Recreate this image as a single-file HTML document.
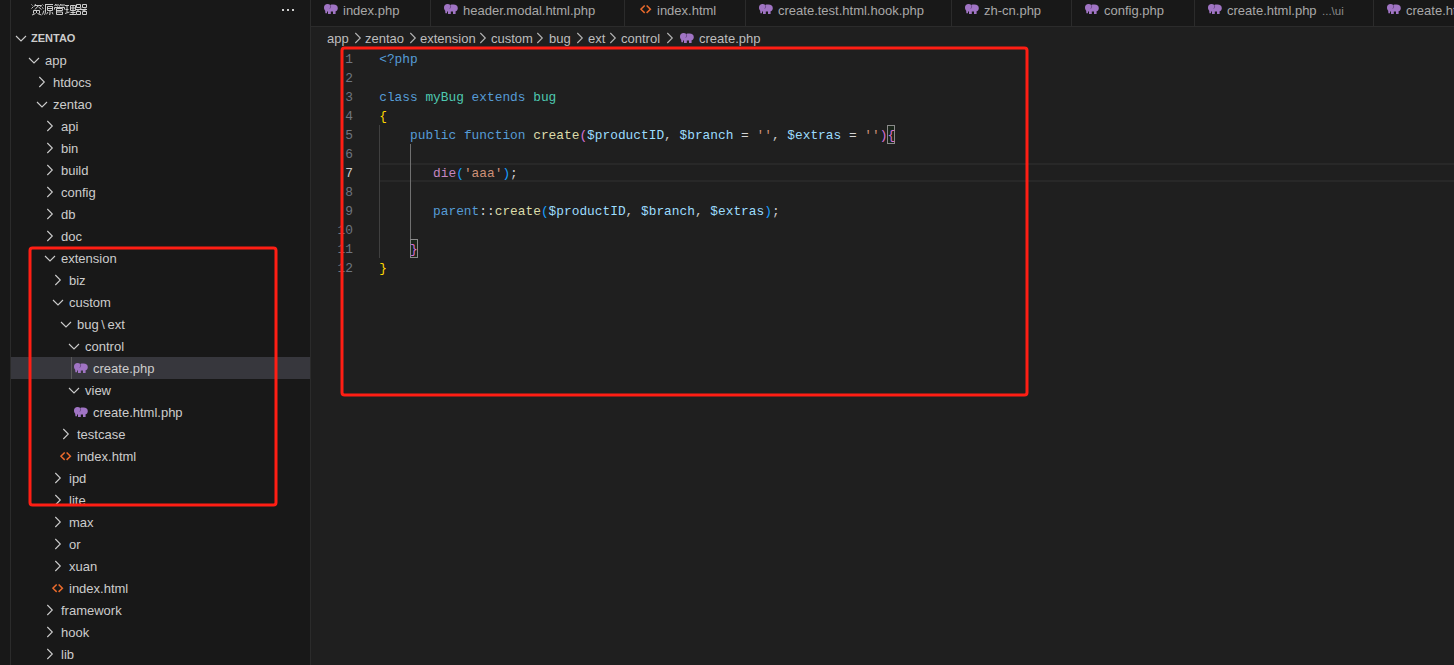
<!DOCTYPE html><html><head><meta charset="utf-8"><style>
html,body{margin:0;padding:0;}
body{width:1454px;height:665px;overflow:hidden;position:relative;background:#181818;font-family:"Liberation Sans", sans-serif;}
.abs{position:absolute;}
.t{position:absolute;white-space:pre;font-size:13px;color:#cccccc;line-height:22px;height:22px;margin-top:1px;}
.tab{position:absolute;white-space:pre;font-size:13px;color:#a8a8a8;line-height:26px;top:-2px;}
.code{position:absolute;white-space:pre;font-family:"Liberation Mono", monospace;font-size:12.83px;line-height:19px;height:19px;color:#cccccc;}
.ln{position:absolute;white-space:pre;font-family:"Liberation Mono", monospace;font-size:12.83px;line-height:19px;height:19px;color:#6e7681;text-align:right;width:40px;}
.bc{position:absolute;white-space:pre;font-size:13px;color:#bdbdbd;line-height:22px;top:28px;}

</style></head><body>
<div class="abs" style="left:10px;top:0;width:1px;height:665px;background:#2b2b2b"></div>
<div class="abs" style="left:310px;top:0;width:1px;height:665px;background:#2b2b2b"></div>
<div class="abs" style="left:311px;top:27px;width:1143px;height:638px;background:#1f1f1f"></div>
<div class="abs" style="left:311px;top:26px;width:1143px;height:1px;background:#2b2b2b"></div>
<svg width="12" height="12" viewBox="0 0 12 12" style="position:absolute;left:31px;top:4px;overflow:visible"><path fill="none" stroke="#cccccc" stroke-width="1" d="M0.5 0.5L1.5 1.5M0.5 4.5L2.5 2.5M4.5 0L3.5 2.5M4 1.5H10.5L9.5 3M7.5 1.5L4 5.5M7.5 3L10.5 5.5M2.5 9.5V6.5H8.5V9.5M5.5 7V9M4.5 9.5L1 11M6.5 9.5L10.5 11"/></svg>
<svg width="12" height="12" viewBox="0 0 12 12" style="position:absolute;left:42px;top:4px;overflow:visible"><path fill="none" stroke="#cccccc" stroke-width="1" d="M0.5 0.5L1.5 1.5M0 3.5L1.5 4.5M0.5 10.5L2 6.5M3 0.5H11M3.5 0.5V7Q3.5 9.5 2.5 10.8M5.5 2.5H10.5V6.5H5.5ZM5.5 4.5H10.5M8 6.5V10.5L7 10M6 8L4.5 10.3M10 8L11 10.3"/></svg>
<svg width="12" height="12" viewBox="0 0 12 12" style="position:absolute;left:53.5px;top:4px;overflow:visible"><path fill="none" stroke="#cccccc" stroke-width="1" d="M2 0L0.5 2M1.5 1H5M2.5 1.5L3.5 2.5M7 0L5.5 2M6.5 1H11M8 1.5L9 2.5M5.5 2.5V3.5M0.5 5.5V3.5H10.5V5.5M2.5 4.5H8.5V6.5H2.5M2.5 4.5V10.5M2.5 8H8.5V10.5H2.5"/></svg>
<svg width="12" height="12" viewBox="0 0 12 12" style="position:absolute;left:64.5px;top:4px;overflow:visible"><path fill="none" stroke="#cccccc" stroke-width="1" d="M0 1.5H4M0.5 5.5H3.5M2 1.5V8.5M0 9.5L4.5 8M5.5 1.5H10.5V6.5H5.5ZM5.5 4H10.5M8 1.5V10.5M5.5 8.5H10.5M4.5 10.5H11"/></svg>
<svg width="12" height="12" viewBox="0 0 12 12" style="position:absolute;left:75.5px;top:4px;overflow:visible"><path fill="none" stroke="#cccccc" stroke-width="1" d="M0.5 0.5H4.5V3.5H0.5ZM6.5 0.5H10.5V3.5H6.5ZM0 5.5H11M5.5 4L0.5 7.5M5.5 5.5L10.5 7.5M8.5 4L9.5 4.8M0.5 7.5H4.5V10.5H0.5ZM6.5 7.5H10.5V10.5H6.5Z"/></svg>
<div class="abs" style="left:282px;top:9px;width:2px;height:2px;background:#cccccc"></div>
<div class="abs" style="left:287px;top:9px;width:2px;height:2px;background:#cccccc"></div>
<div class="abs" style="left:292px;top:9px;width:2px;height:2px;background:#cccccc"></div>
<div class="abs" style="left:11px;top:357px;width:299px;height:22px;background:#37373d"></div>
<div class="abs" style="left:71px;top:357px;width:1px;height:22px;background:#585858"></div>
<svg width="12" height="8" viewBox="0 0 12 8" style="position:absolute;left:15px;top:34px"><path fill="none" stroke="#cccccc" stroke-width="1.1" d="M1 2L6 7L11 2"/></svg>
<div class="abs" style="left:31px;top:27px;font-size:11px;font-weight:bold;line-height:22px;color:#cccccc">ZENTAO</div>
<svg width="12" height="8" viewBox="0 0 12 8" style="position:absolute;left:28px;top:56px"><path fill="none" stroke="#cccccc" stroke-width="1.1" d="M1 2L6 7L11 2"/></svg>
<div class="t" style="left:45px;top:49px">app</div>
<svg width="8" height="12" viewBox="0 0 8 12" style="position:absolute;left:38px;top:76px"><path fill="none" stroke="#cccccc" stroke-width="1.1" d="M1.3 1L6.3 6L1.3 11"/></svg>
<div class="t" style="left:53px;top:71px">htdocs</div>
<svg width="12" height="8" viewBox="0 0 12 8" style="position:absolute;left:36px;top:100px"><path fill="none" stroke="#cccccc" stroke-width="1.1" d="M1 2L6 7L11 2"/></svg>
<div class="t" style="left:53px;top:93px">zentao</div>
<svg width="8" height="12" viewBox="0 0 8 12" style="position:absolute;left:46px;top:120px"><path fill="none" stroke="#cccccc" stroke-width="1.1" d="M1.3 1L6.3 6L1.3 11"/></svg>
<div class="t" style="left:61px;top:115px">api</div>
<svg width="8" height="12" viewBox="0 0 8 12" style="position:absolute;left:46px;top:142px"><path fill="none" stroke="#cccccc" stroke-width="1.1" d="M1.3 1L6.3 6L1.3 11"/></svg>
<div class="t" style="left:61px;top:137px">bin</div>
<svg width="8" height="12" viewBox="0 0 8 12" style="position:absolute;left:46px;top:164px"><path fill="none" stroke="#cccccc" stroke-width="1.1" d="M1.3 1L6.3 6L1.3 11"/></svg>
<div class="t" style="left:61px;top:159px">build</div>
<svg width="8" height="12" viewBox="0 0 8 12" style="position:absolute;left:46px;top:186px"><path fill="none" stroke="#cccccc" stroke-width="1.1" d="M1.3 1L6.3 6L1.3 11"/></svg>
<div class="t" style="left:61px;top:181px">config</div>
<svg width="8" height="12" viewBox="0 0 8 12" style="position:absolute;left:46px;top:208px"><path fill="none" stroke="#cccccc" stroke-width="1.1" d="M1.3 1L6.3 6L1.3 11"/></svg>
<div class="t" style="left:61px;top:203px">db</div>
<svg width="8" height="12" viewBox="0 0 8 12" style="position:absolute;left:46px;top:230px"><path fill="none" stroke="#cccccc" stroke-width="1.1" d="M1.3 1L6.3 6L1.3 11"/></svg>
<div class="t" style="left:61px;top:225px">doc</div>
<svg width="12" height="8" viewBox="0 0 12 8" style="position:absolute;left:44px;top:254px"><path fill="none" stroke="#cccccc" stroke-width="1.1" d="M1 2L6 7L11 2"/></svg>
<div class="t" style="left:61px;top:247px">extension</div>
<svg width="8" height="12" viewBox="0 0 8 12" style="position:absolute;left:54px;top:274px"><path fill="none" stroke="#cccccc" stroke-width="1.1" d="M1.3 1L6.3 6L1.3 11"/></svg>
<div class="t" style="left:69px;top:269px">biz</div>
<svg width="12" height="8" viewBox="0 0 12 8" style="position:absolute;left:52px;top:298px"><path fill="none" stroke="#cccccc" stroke-width="1.1" d="M1 2L6 7L11 2"/></svg>
<div class="t" style="left:69px;top:291px">custom</div>
<svg width="12" height="8" viewBox="0 0 12 8" style="position:absolute;left:60px;top:320px"><path fill="none" stroke="#cccccc" stroke-width="1.1" d="M1 2L6 7L11 2"/></svg>
<div class="t" style="left:77px;top:313px">bug \ ext</div>
<svg width="12" height="8" viewBox="0 0 12 8" style="position:absolute;left:68px;top:342px"><path fill="none" stroke="#cccccc" stroke-width="1.1" d="M1 2L6 7L11 2"/></svg>
<div class="t" style="left:85px;top:335px">control</div>
<svg width="14" height="10" viewBox="0 0 14 10" style="position:absolute;left:74px;top:363px"><path fill="#a074c4" d="M1.4 9.2L1.2 6.8C0.4 6 0 5 0 3.6C0 1.4 1.5 0 3.4 0C4.6 0 5.6 0.4 6.3 1C7 0.7 7.8 0.6 9.5 0.6C12.2 0.6 13.8 2 13.8 4.2C13.8 5.8 12.9 6.8 11.6 7.3L11.6 10L9 10L9 7.6L6.8 7.6L6.8 10L4 10L4 7.4L3 7.6L3 9.2Z"/><path fill="none" stroke="#5e3f7a" stroke-width="0.8" d="M6.3 1.2C6.8 2.2 6.7 3.6 5.8 4.6"/></svg>
<div class="t" style="left:93px;top:357px">create.php</div>
<svg width="12" height="8" viewBox="0 0 12 8" style="position:absolute;left:68px;top:386px"><path fill="none" stroke="#cccccc" stroke-width="1.1" d="M1 2L6 7L11 2"/></svg>
<div class="t" style="left:85px;top:379px">view</div>
<svg width="14" height="10" viewBox="0 0 14 10" style="position:absolute;left:74px;top:407px"><path fill="#a074c4" d="M1.4 9.2L1.2 6.8C0.4 6 0 5 0 3.6C0 1.4 1.5 0 3.4 0C4.6 0 5.6 0.4 6.3 1C7 0.7 7.8 0.6 9.5 0.6C12.2 0.6 13.8 2 13.8 4.2C13.8 5.8 12.9 6.8 11.6 7.3L11.6 10L9 10L9 7.6L6.8 7.6L6.8 10L4 10L4 7.4L3 7.6L3 9.2Z"/><path fill="none" stroke="#5e3f7a" stroke-width="0.8" d="M6.3 1.2C6.8 2.2 6.7 3.6 5.8 4.6"/></svg>
<div class="t" style="left:93px;top:401px">create.html.php</div>
<svg width="8" height="12" viewBox="0 0 8 12" style="position:absolute;left:62px;top:428px"><path fill="none" stroke="#cccccc" stroke-width="1.1" d="M1.3 1L6.3 6L1.3 11"/></svg>
<div class="t" style="left:77px;top:423px">testcase</div>
<svg width="12" height="9" viewBox="0 0 12 9" style="position:absolute;left:59.5px;top:451.5px"><path fill="none" stroke="#e96a2c" stroke-width="1.5" d="M4.7 0.5L0.9 4.2L4.7 7.9M6.6 0.5L10.4 4.2L6.6 7.9"/></svg>
<div class="t" style="left:77px;top:445px">index.html</div>
<svg width="8" height="12" viewBox="0 0 8 12" style="position:absolute;left:54px;top:472px"><path fill="none" stroke="#cccccc" stroke-width="1.1" d="M1.3 1L6.3 6L1.3 11"/></svg>
<div class="t" style="left:69px;top:467px">ipd</div>
<svg width="8" height="12" viewBox="0 0 8 12" style="position:absolute;left:54px;top:494px"><path fill="none" stroke="#cccccc" stroke-width="1.1" d="M1.3 1L6.3 6L1.3 11"/></svg>
<div class="t" style="left:69px;top:489px">lite</div>
<svg width="8" height="12" viewBox="0 0 8 12" style="position:absolute;left:54px;top:516px"><path fill="none" stroke="#cccccc" stroke-width="1.1" d="M1.3 1L6.3 6L1.3 11"/></svg>
<div class="t" style="left:69px;top:511px">max</div>
<svg width="8" height="12" viewBox="0 0 8 12" style="position:absolute;left:54px;top:538px"><path fill="none" stroke="#cccccc" stroke-width="1.1" d="M1.3 1L6.3 6L1.3 11"/></svg>
<div class="t" style="left:69px;top:533px">or</div>
<svg width="8" height="12" viewBox="0 0 8 12" style="position:absolute;left:54px;top:560px"><path fill="none" stroke="#cccccc" stroke-width="1.1" d="M1.3 1L6.3 6L1.3 11"/></svg>
<div class="t" style="left:69px;top:555px">xuan</div>
<svg width="12" height="9" viewBox="0 0 12 9" style="position:absolute;left:51.5px;top:583.5px"><path fill="none" stroke="#e96a2c" stroke-width="1.5" d="M4.7 0.5L0.9 4.2L4.7 7.9M6.6 0.5L10.4 4.2L6.6 7.9"/></svg>
<div class="t" style="left:69px;top:577px">index.html</div>
<svg width="8" height="12" viewBox="0 0 8 12" style="position:absolute;left:46px;top:604px"><path fill="none" stroke="#cccccc" stroke-width="1.1" d="M1.3 1L6.3 6L1.3 11"/></svg>
<div class="t" style="left:61px;top:599px">framework</div>
<svg width="8" height="12" viewBox="0 0 8 12" style="position:absolute;left:46px;top:626px"><path fill="none" stroke="#cccccc" stroke-width="1.1" d="M1.3 1L6.3 6L1.3 11"/></svg>
<div class="t" style="left:61px;top:621px">hook</div>
<svg width="8" height="12" viewBox="0 0 8 12" style="position:absolute;left:46px;top:648px"><path fill="none" stroke="#cccccc" stroke-width="1.1" d="M1.3 1L6.3 6L1.3 11"/></svg>
<div class="t" style="left:61px;top:643px">lib</div>
<svg width="14" height="10" viewBox="0 0 14 10" style="position:absolute;left:324px;top:4px"><path fill="#a074c4" d="M1.4 9.2L1.2 6.8C0.4 6 0 5 0 3.6C0 1.4 1.5 0 3.4 0C4.6 0 5.6 0.4 6.3 1C7 0.7 7.8 0.6 9.5 0.6C12.2 0.6 13.8 2 13.8 4.2C13.8 5.8 12.9 6.8 11.6 7.3L11.6 10L9 10L9 7.6L6.8 7.6L6.8 10L4 10L4 7.4L3 7.6L3 9.2Z"/><path fill="none" stroke="#5e3f7a" stroke-width="0.8" d="M6.3 1.2C6.8 2.2 6.7 3.6 5.8 4.6"/></svg>
<div class="tab" style="left:343px">index.php</div>
<div class="abs" style="left:430px;top:0;width:1px;height:26px;background:#2b2b2b"></div>
<svg width="14" height="10" viewBox="0 0 14 10" style="position:absolute;left:444px;top:4px"><path fill="#a074c4" d="M1.4 9.2L1.2 6.8C0.4 6 0 5 0 3.6C0 1.4 1.5 0 3.4 0C4.6 0 5.6 0.4 6.3 1C7 0.7 7.8 0.6 9.5 0.6C12.2 0.6 13.8 2 13.8 4.2C13.8 5.8 12.9 6.8 11.6 7.3L11.6 10L9 10L9 7.6L6.8 7.6L6.8 10L4 10L4 7.4L3 7.6L3 9.2Z"/><path fill="none" stroke="#5e3f7a" stroke-width="0.8" d="M6.3 1.2C6.8 2.2 6.7 3.6 5.8 4.6"/></svg>
<div class="tab" style="left:463px">header.modal.html.php</div>
<div class="abs" style="left:624px;top:0;width:1px;height:26px;background:#2b2b2b"></div>
<svg width="12" height="9" viewBox="0 0 12 9" style="position:absolute;left:639.5px;top:4.5px"><path fill="none" stroke="#e96a2c" stroke-width="1.5" d="M4.7 0.5L0.9 4.2L4.7 7.9M6.6 0.5L10.4 4.2L6.6 7.9"/></svg>
<div class="tab" style="left:657px">index.html</div>
<div class="abs" style="left:745px;top:0;width:1px;height:26px;background:#2b2b2b"></div>
<svg width="14" height="10" viewBox="0 0 14 10" style="position:absolute;left:759px;top:4px"><path fill="#a074c4" d="M1.4 9.2L1.2 6.8C0.4 6 0 5 0 3.6C0 1.4 1.5 0 3.4 0C4.6 0 5.6 0.4 6.3 1C7 0.7 7.8 0.6 9.5 0.6C12.2 0.6 13.8 2 13.8 4.2C13.8 5.8 12.9 6.8 11.6 7.3L11.6 10L9 10L9 7.6L6.8 7.6L6.8 10L4 10L4 7.4L3 7.6L3 9.2Z"/><path fill="none" stroke="#5e3f7a" stroke-width="0.8" d="M6.3 1.2C6.8 2.2 6.7 3.6 5.8 4.6"/></svg>
<div class="tab" style="left:778px">create.test.html.hook.php</div>
<div class="abs" style="left:951px;top:0;width:1px;height:26px;background:#2b2b2b"></div>
<svg width="14" height="10" viewBox="0 0 14 10" style="position:absolute;left:965px;top:4px"><path fill="#a074c4" d="M1.4 9.2L1.2 6.8C0.4 6 0 5 0 3.6C0 1.4 1.5 0 3.4 0C4.6 0 5.6 0.4 6.3 1C7 0.7 7.8 0.6 9.5 0.6C12.2 0.6 13.8 2 13.8 4.2C13.8 5.8 12.9 6.8 11.6 7.3L11.6 10L9 10L9 7.6L6.8 7.6L6.8 10L4 10L4 7.4L3 7.6L3 9.2Z"/><path fill="none" stroke="#5e3f7a" stroke-width="0.8" d="M6.3 1.2C6.8 2.2 6.7 3.6 5.8 4.6"/></svg>
<div class="tab" style="left:984px">zh-cn.php</div>
<div class="abs" style="left:1071px;top:0;width:1px;height:26px;background:#2b2b2b"></div>
<svg width="14" height="10" viewBox="0 0 14 10" style="position:absolute;left:1085px;top:4px"><path fill="#a074c4" d="M1.4 9.2L1.2 6.8C0.4 6 0 5 0 3.6C0 1.4 1.5 0 3.4 0C4.6 0 5.6 0.4 6.3 1C7 0.7 7.8 0.6 9.5 0.6C12.2 0.6 13.8 2 13.8 4.2C13.8 5.8 12.9 6.8 11.6 7.3L11.6 10L9 10L9 7.6L6.8 7.6L6.8 10L4 10L4 7.4L3 7.6L3 9.2Z"/><path fill="none" stroke="#5e3f7a" stroke-width="0.8" d="M6.3 1.2C6.8 2.2 6.7 3.6 5.8 4.6"/></svg>
<div class="tab" style="left:1104px">config.php</div>
<div class="abs" style="left:1194px;top:0;width:1px;height:26px;background:#2b2b2b"></div>
<svg width="14" height="10" viewBox="0 0 14 10" style="position:absolute;left:1208px;top:4px"><path fill="#a074c4" d="M1.4 9.2L1.2 6.8C0.4 6 0 5 0 3.6C0 1.4 1.5 0 3.4 0C4.6 0 5.6 0.4 6.3 1C7 0.7 7.8 0.6 9.5 0.6C12.2 0.6 13.8 2 13.8 4.2C13.8 5.8 12.9 6.8 11.6 7.3L11.6 10L9 10L9 7.6L6.8 7.6L6.8 10L4 10L4 7.4L3 7.6L3 9.2Z"/><path fill="none" stroke="#5e3f7a" stroke-width="0.8" d="M6.3 1.2C6.8 2.2 6.7 3.6 5.8 4.6"/></svg>
<div class="tab" style="left:1227px">create.html.php</div>
<div class="tab" style="left:1322px;font-size:11.5px;color:#8b8b8b">...\ui</div>
<div class="abs" style="left:1373px;top:0;width:1px;height:26px;background:#2b2b2b"></div>
<svg width="14" height="10" viewBox="0 0 14 10" style="position:absolute;left:1387px;top:4px"><path fill="#a074c4" d="M1.4 9.2L1.2 6.8C0.4 6 0 5 0 3.6C0 1.4 1.5 0 3.4 0C4.6 0 5.6 0.4 6.3 1C7 0.7 7.8 0.6 9.5 0.6C12.2 0.6 13.8 2 13.8 4.2C13.8 5.8 12.9 6.8 11.6 7.3L11.6 10L9 10L9 7.6L6.8 7.6L6.8 10L4 10L4 7.4L3 7.6L3 9.2Z"/><path fill="none" stroke="#5e3f7a" stroke-width="0.8" d="M6.3 1.2C6.8 2.2 6.7 3.6 5.8 4.6"/></svg>
<div class="tab" style="left:1406px">create.html.php</div>
<div class="bc" style="left:327px">app</div>
<div class="bc" style="left:365px">zentao</div>
<div class="bc" style="left:420px">extension</div>
<div class="bc" style="left:491px">custom</div>
<div class="bc" style="left:549px">bug</div>
<div class="bc" style="left:588px">ext</div>
<div class="bc" style="left:621px">control</div>
<svg width="14" height="10" viewBox="0 0 14 10" style="position:absolute;left:680px;top:33px"><path fill="#a074c4" d="M1.4 9.2L1.2 6.8C0.4 6 0 5 0 3.6C0 1.4 1.5 0 3.4 0C4.6 0 5.6 0.4 6.3 1C7 0.7 7.8 0.6 9.5 0.6C12.2 0.6 13.8 2 13.8 4.2C13.8 5.8 12.9 6.8 11.6 7.3L11.6 10L9 10L9 7.6L6.8 7.6L6.8 10L4 10L4 7.4L3 7.6L3 9.2Z"/><path fill="none" stroke="#5e3f7a" stroke-width="0.8" d="M6.3 1.2C6.8 2.2 6.7 3.6 5.8 4.6"/></svg>
<div class="bc" style="left:699px">create.php</div>
<svg width="8" height="12" viewBox="0 0 8 12" style="position:absolute;left:353.5px;top:32px"><path fill="none" stroke="#b5b5b5" stroke-width="1.1" d="M1.3 1L6.3 6L1.3 11"/></svg>
<svg width="8" height="12" viewBox="0 0 8 12" style="position:absolute;left:408.5px;top:32px"><path fill="none" stroke="#b5b5b5" stroke-width="1.1" d="M1.3 1L6.3 6L1.3 11"/></svg>
<svg width="8" height="12" viewBox="0 0 8 12" style="position:absolute;left:478.5px;top:32px"><path fill="none" stroke="#b5b5b5" stroke-width="1.1" d="M1.3 1L6.3 6L1.3 11"/></svg>
<svg width="8" height="12" viewBox="0 0 8 12" style="position:absolute;left:536px;top:32px"><path fill="none" stroke="#b5b5b5" stroke-width="1.1" d="M1.3 1L6.3 6L1.3 11"/></svg>
<svg width="8" height="12" viewBox="0 0 8 12" style="position:absolute;left:575.5px;top:32px"><path fill="none" stroke="#b5b5b5" stroke-width="1.1" d="M1.3 1L6.3 6L1.3 11"/></svg>
<svg width="8" height="12" viewBox="0 0 8 12" style="position:absolute;left:609px;top:32px"><path fill="none" stroke="#b5b5b5" stroke-width="1.1" d="M1.3 1L6.3 6L1.3 11"/></svg>
<svg width="8" height="12" viewBox="0 0 8 12" style="position:absolute;left:666px;top:32px"><path fill="none" stroke="#b5b5b5" stroke-width="1.1" d="M1.3 1L6.3 6L1.3 11"/></svg>
<div class="abs" style="left:380px;top:163px;width:1074px;height:15px;border-top:2px solid #282828;border-bottom:2px solid #282828"></div>
<div class="abs" style="left:379px;top:125px;width:1px;height:133px;background:#404040"></div>
<div class="abs" style="left:410px;top:144px;width:1px;height:95px;background:#707070"></div>
<div class="abs" style="left:887px;top:125px;width:6px;height:17px;border:1px solid #8a8a8a;background:rgba(0,100,0,0.1)"></div>
<div class="abs" style="left:410px;top:239px;width:6px;height:17px;border:1px solid #8a8a8a;background:rgba(0,100,0,0.1)"></div>
<div class="ln" style="left:313px;top:50px;color:#6e7681">1</div>
<div class="code" style="left:379.2px;top:50px"><span style="color:#569cd6">&lt;?php</span></div>
<div class="ln" style="left:313px;top:69px;color:#6e7681">2</div>
<div class="ln" style="left:313px;top:88px;color:#6e7681">3</div>
<div class="code" style="left:379.2px;top:88px"><span style="color:#569cd6">class</span> <span style="color:#4ec9b0">myBug</span> <span style="color:#569cd6">extends</span> <span style="color:#4ec9b0">bug</span></div>
<div class="ln" style="left:313px;top:107px;color:#6e7681">4</div>
<div class="code" style="left:379.2px;top:107px"><span style="color:#ffd700">{</span></div>
<div class="ln" style="left:313px;top:126px;color:#6e7681">5</div>
<div class="code" style="left:379.2px;top:126px">    <span style="color:#569cd6">public</span> <span style="color:#569cd6">function</span> <span style="color:#dcdcaa">create</span><span style="color:#da70d6">(</span><span style="color:#9cdcfe">$productID</span>, <span style="color:#9cdcfe">$branch</span> <span style="color:#d4d4d4">=</span> <span style="color:#ce9178">''</span>, <span style="color:#9cdcfe">$extras</span> <span style="color:#d4d4d4">=</span> <span style="color:#ce9178">''</span><span style="color:#da70d6">)</span><span style="color:#da70d6">{</span></div>
<div class="ln" style="left:313px;top:145px;color:#6e7681">6</div>
<div class="ln" style="left:313px;top:164px;color:#cccccc">7</div>
<div class="code" style="left:379.2px;top:164px">       <span style="color:#c586c0">die</span><span style="color:#179fff">(</span><span style="color:#ce9178">'aaa'</span><span style="color:#179fff">)</span>;</div>
<div class="ln" style="left:313px;top:183px;color:#6e7681">8</div>
<div class="ln" style="left:313px;top:202px;color:#6e7681">9</div>
<div class="code" style="left:379.2px;top:202px">       <span style="color:#569cd6">parent</span><span style="color:#d4d4d4">::</span><span style="color:#dcdcaa">create</span><span style="color:#179fff">(</span><span style="color:#9cdcfe">$productID</span>, <span style="color:#9cdcfe">$branch</span>, <span style="color:#9cdcfe">$extras</span><span style="color:#179fff">)</span>;</div>
<div class="ln" style="left:313px;top:221px;color:#6e7681">10</div>
<div class="ln" style="left:313px;top:240px;color:#6e7681">11</div>
<div class="code" style="left:379.2px;top:240px">    <span style="color:#da70d6">}</span></div>
<div class="ln" style="left:313px;top:259px;color:#6e7681">12</div>
<div class="code" style="left:379.2px;top:259px"><span style="color:#ffd700">}</span></div>
<svg width="1454" height="665" style="position:absolute;left:0;top:0" viewBox="0 0 1454 665"><rect x="342" y="48" width="685" height="347" rx="2.5" fill="none" stroke="#ff1e14" stroke-width="3"/><rect x="30" y="248" width="246" height="257" rx="2.5" fill="none" stroke="#ff1e14" stroke-width="3"/></svg>
</body></html>
